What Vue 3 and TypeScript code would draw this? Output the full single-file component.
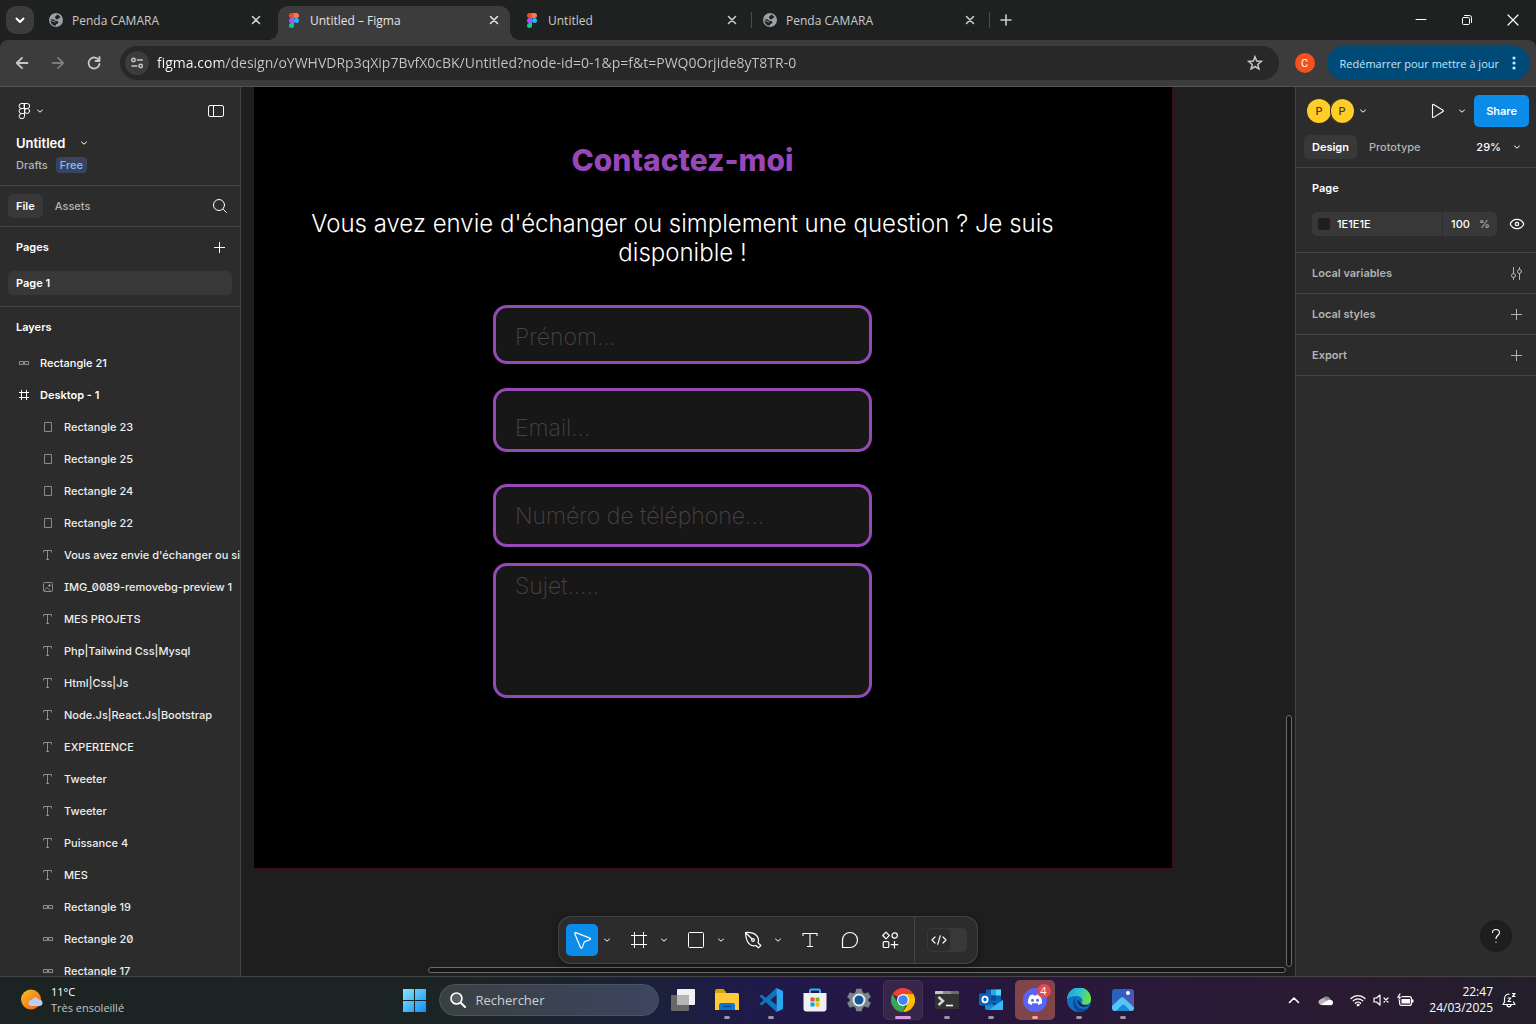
<script setup lang="ts">
import { h, ref } from 'vue'

interface Glyph {
  w: number
  h: number
  body: string
}

const line = (w: number, hgt: number, body: string): Glyph => ({
  w,
  h: hgt,
  body: `<g fill="none" stroke="currentColor" stroke-linecap="round" stroke-linejoin="round">${body}</g>`,
})

const glyphs: Record<string, Glyph> = {
  // browser
  tabMenu: line(12, 12, '<path stroke-width="2" d="M2.5 4.5 6 8l3.500-3.500"/>'),
  globe: {
    w: 16,
    h: 16,
    body: '<circle cx="8" cy="8" r="7" fill="#9aa0a6"/><path fill="#1f2120" d="M8.600 2.600c1.500.300 3.200 1.200 4 2.900l-1.600.300-.900 1.500H8.300L7.200 6.100l-.100-1.700 1.500-.700zM2.500 7.300l3.300.200 1.500 1.200 2.100.200 1 1.300-.400 1.300-1.700.400-.700 1.800c-2.900-.200-5-2.400-5.200-5l1.600.900 2 .200.900 1 .600-.500-1.200-1.300-2.600-.300z"/>',
  },
  figma: {
    w: 10,
    h: 16,
    body: '<path fill="#f24e1e" d="M2.500 1H5v5H2.500a2.500 2.500 0 0 1 0-5z"/><path fill="#ff7262" d="M5 1h2.500a2.500 2.500 0 0 1 0 5H5z"/><path fill="#a259ff" d="M2.500 6H5v5H2.500a2.500 2.500 0 0 1 0-5z"/><circle cx="7.500" cy="8.500" r="2.500" fill="#1abcfe"/><path fill="#0acf83" d="M2.500 11H5v2.500A2.500 2.500 0 1 1 2.500 11z"/>',
  },
  tabClose: line(10, 10, '<path stroke-width="1.600" d="m1.500 1.500 7 7m0-7-7 7"/>'),
  newTab: line(12, 12, '<path stroke-width="1.600" d="M6 1v10M1 6h10"/>'),
  minimise: line(12, 12, '<path d="M1 5.500h10"/>'),
  restore: line(12, 12, '<rect x="1.500" y="3.500" width="7" height="7" rx="1"/><path d="M3.500 1.500h5a2 2 0 0 1 2 2v5"/>'),
  winClose: line(12, 12, '<path stroke-width="1.200" d="m1 1 10 10m0-10L1 11"/>'),
  back: line(16, 16, '<path stroke-width="1.800" d="M13.500 8H3m5-5.200L2.700 8 8 13.200"/>'),
  forward: line(16, 16, '<path stroke-width="1.800" d="M2.500 8H13M8 2.800 13.300 8 8 13.200"/>'),
  reload: line(16, 16, '<path stroke-width="1.800" d="M13 5.500A5.500 5.500 0 1 0 13.500 9M13.500 2v4h-4"/>'),
  tune: line(16, 16, '<path stroke-width="1.600" d="M8.500 5h4.800M3 11h4.800"/><circle stroke-width="1.500" cx="4.500" cy="5" r="1.700"/><circle stroke-width="1.500" cx="11.700" cy="11" r="1.700"/>'),
  star: line(18, 18, '<path stroke-width="1.500" stroke-linejoin="miter" d="m9 2.800 1.700 4.300 4.600.300-3.500 3 1.100 4.500L9 12.500l-3.900 2.400 1.100-4.500-3.500-3 4.600-.300z"/>'),
  dots: { w: 4, h: 16, body: '<g fill="currentColor"><circle cx="2" cy="3" r="1.600"/><circle cx="2" cy="8" r="1.600"/><circle cx="2" cy="13" r="1.600"/></g>' },

  // editor
  figmaLine: line(16, 18, '<path d="M5.500 1.500h3v5h-3a2.500 2.500 0 0 1 0-5zM8.500 1.500h2.700a2.500 2.500 0 0 1 0 5H8.500zM5.500 6.500h3v5h-3a2.500 2.500 0 0 1 0-5z"/><circle cx="11.100" cy="9" r="2.500"/><path d="M5.500 11.500h3v2.400a2.700 2.600 0 1 1-3-2.400z"/>'),
  chevron: line(8, 8, '<path d="M1.500 3 4 5.200 6.500 3"/>'),
  panel: line(16, 12, '<rect x=".5" y=".5" width="15" height="11" rx="1.500"/><path d="M5.500.5v11"/>'),
  search: line(16, 16, '<circle cx="7" cy="7" r="5.500"/><path d="m11 11 3.500 3.500"/>'),
  plusThin: { w: 11, h: 11, body: '<path fill="none" stroke="currentColor" d="M5.500 0v11M0 5.500h11"/>' },
  instance: { w: 12, h: 12, body: '<path fill="none" stroke="currentColor" d="M1.500 4.500h4v3h-4zM6.500 4.500h4v3h-4zM4.500 6h3"/>' },
  frameSmall: { w: 12, h: 12, body: '<path fill="none" stroke="currentColor" d="M3.500 1v10M8.500 1v10M1 3.500h10M1 8.500h10"/>' },
  rect: { w: 12, h: 12, body: '<path fill="none" stroke="currentColor" d="M2.500 1.500h7v9h-7z"/>' },
  text: { w: 12, h: 12, body: '<path fill="none" stroke="currentColor" d="M1.500 3.500v-2h8v2M5.500 1.500v9M4 10.500h3"/>' },
  image: { w: 12, h: 12, body: '<g fill="none" stroke="currentColor"><rect x="1.500" y="1.500" width="9" height="9" rx="1"/><path d="m2 10 3-3.500L8.500 10M7.500 3v3M6 4.500h3"/></g>' },
  play: line(14, 16, '<path stroke-width="1.100" d="M1.500 2.200c0-.600.600-1 1.100-.700l9.400 5.700c.500.300.500 1 0 1.300L2.600 14.400c-.500.300-1.100 0-1.100-.600z"/>'),
  eye: line(16, 12, '<path stroke-width="1.200" d="M1.200 6C2.500 3 5 1.300 8 1.300S13.500 3 14.800 6C13.500 9 11 10.700 8 10.700S2.500 9 1.200 6z"/><circle stroke-width="1.200" cx="8" cy="6" r="1.700"/>'),
  sliders: line(13, 13, '<path d="M3.500.5v6M3.500 10.500v2M9.500.5v2M9.500 6.500v6"/><circle cx="3.500" cy="8.500" r="2"/><circle cx="9.500" cy="4.500" r="2"/>'),
  move: line(20, 20, '<path stroke-width="1.200" d="M2.800 3.700c-.300-.700.400-1.400 1.100-1.100l14 5.500c.800.300.800 1.400 0 1.700l-5.600 2.100-2.100 5.700c-.300.800-1.400.800-1.700 0z"/>'),
  frame: { w: 16, h: 16, body: '<path fill="none" stroke="currentColor" d="M3.500 0v16M12.500 0v16M0 3.500h16M0 12.500h16"/>' },
  square: { w: 16, h: 16, body: '<rect fill="none" stroke="currentColor" x=".5" y=".5" width="15" height="15" rx="1"/>' },
  pen: line(20, 20, '<path stroke-width="1.200" d="M2.500 2.500c4-.300 8.800.700 11 3 2.200 2.200 2.300 4.800 1.600 7.300l2.700 2.700-2.300 2.300-2.700-2.300c-2.700.800-5 .200-6.800-1.800-2.300-2.400-3.300-7-3.500-11.200zM3 3l6 6"/><circle stroke-width="1.200" cx="10" cy="10" r="1.400"/>'),
  textBig: { w: 16, h: 16, body: '<path fill="none" stroke="currentColor" stroke-width="1.100" d="M1 4V1.500h14V4M8 1.500v13M5 14.500h6"/>' },
  comment: line(18, 18, '<path stroke-width="1.200" d="M1.500 16.500V9A7.500 7.500 0 1 1 9 16.500z"/>'),
  actions: line(18, 18, '<path stroke-width="1.200" d="m5 1.200 3.300 3.300L5 7.800 1.700 4.500zM13.500 10.500v6.500M10.300 13.700h6.500"/><circle stroke-width="1.200" cx="13.700" cy="4.500" r="2.700"/><rect stroke-width="1.200" x="2.200" y="10.700" width="5.600" height="5.800" rx="1"/>'),
  code: line(16, 12, '<path stroke-width="1.200" d="M4 3 1 6l3 3M12 3l3 3-3 3M9.300 1.700l-2.600 8.600"/>'),
  help: line(12, 16, '<path stroke-width="1.200" d="M2.500 4.500C2.500 2.500 4 1.500 6 1.500s3.500 1.200 3.500 3.200C9.500 7.200 6 7.300 6 10.500M6 14v.300"/>'),

  // taskbar
  weather: {
    w: 24,
    h: 24,
    body: '<defs><linearGradient id="sun" x1="0" y1="0" x2="1" y2="1"><stop stop-color="#fbc02d"/><stop offset="1" stop-color="#ef5f0b"/></linearGradient></defs><circle cx="11" cy="11.500" r="10" fill="url(#sun)"/><path fill="#b9cff5" d="M11.500 18a3 3 0 0 1 .3-6 4 4 0 0 1 7-.600 3.400 3.400 0 0 1 1.400 6.600z"/>',
  },
  windows: {
    w: 24,
    h: 24,
    body: '<defs><linearGradient id="win" x1="0" y1="0" x2="1" y2="1"><stop stop-color="#8be3ff"/><stop offset="1" stop-color="#0c8ff5"/></linearGradient></defs><path fill="url(#win)" d="M1 1h11v11H1zM13 1h11v11H13zM1 13h11v11H1zM13 13h11v11H13z"/>',
  },
  lens: line(16, 16, '<circle cx="6.500" cy="6.500" r="5.500" stroke-width="1.600" fill="#8a8f93" fill-opacity=".4"/><path stroke-width="2" d="m11 11 4 4"/>'),
  taskView: { w: 24, h: 24, body: '<rect x="0" y="7" width="18" height="16" rx="1" fill="#686868"/><rect x="6" y="1" width="18" height="16" rx="1" fill="#f1f1f1"/><path fill="#b5b5b5" d="M6 7h12v10H6z"/>' },
  folder: {
    w: 24,
    h: 24,
    body: '<path fill="#e2a000" d="M0 3a2 2 0 0 1 2-2h6.500l2.500 3v4H0z"/><path fill="#ffca3a" d="M0 5h22.500A1.500 1.500 0 0 1 24 6.500V22H0z"/><path fill="#0f75d1" d="M4 22v-5a2 2 0 0 1 2-2h12a2 2 0 0 1 2 2v5z"/><path stroke="#0a4f94" stroke-width="1.500" d="M8 18.500h8"/>',
  },
  vscode: {
    w: 24,
    h: 24,
    body: '<path fill="#0a79c4" d="M17.500 0 7 10 2.800 6.800.3 8 17.500 24z"/><path fill="#1173b9" d="M.3 16 2.800 17.500 17.500 6V0z"/><path fill="#29a7f3" d="m17.500 0 5.500 2.500a1.500 1.500 0 0 1 1 1.400v16.200a1.500 1.500 0 0 1-1 1.400L17.500 24z"/><path fill="#20204c" d="M17.500 7v10l-6.300-5z"/>',
  },
  store: {
    w: 24,
    h: 24,
    body: '<path fill="none" stroke="#2fb5ef" stroke-width="2" d="M7 6V3a1.500 1.500 0 0 1 1.500-1.500h7A1.500 1.500 0 0 1 17 3v3"/><path fill="#f1f1f3" d="M.5 5h23v15.500a3 3 0 0 1-3 3h-17a3 3 0 0 1-3-3z"/><path fill="#f25022" d="M7.500 9.500h4v4h-4z"/><path fill="#7fba00" d="M12.500 9.500h4v4h-4z"/><path fill="#00a4ef" d="M7.500 14.500h4v4h-4z"/><path fill="#ffb900" d="M12.500 14.500h4v4h-4z"/>',
  },
  settings: {
    w: 24,
    h: 24,
    body: '<path fill="#7c858c" d="m9.300.8 5.400 0 .9 3.400 2.200 1.200 3.400-1.100 2.700 4.700-2.600 2.300v1.400l2.600 2.300-2.700 4.700-3.400-1.100-2.200 1.200-.9 3.400H9.300l-.9-3.400-2.200-1.200-3.400 1.100L.1 15l2.600-2.300v-1.400L.1 9l2.700-4.700 3.400 1.100 2.200-1.200z"/><circle cx="12" cy="12" r="6.500" fill="#e9eef2"/><circle cx="12" cy="12" r="4.500" fill="#10589b"/>',
  },
  chrome: {
    w: 24,
    h: 24,
    body: '<path fill="#ea4335" d="M12 12 1.600 6A12 12 0 0 1 22.400 6z"/><path fill="#fbbc05" d="M12 12V6h10.400A12 12 0 0 1 12 24l5.200-9z"/><path fill="#34a853" d="m6.800 15 5.200 3 2.500-.700L12 24A12 12 0 0 1 1.600 6z"/><circle cx="12" cy="12" r="6" fill="#fff"/><circle cx="12" cy="12" r="4.800" fill="#4285f4"/>',
  },
  terminal: { w: 24, h: 24, body: '<rect y="3" width="24" height="18" rx="1" fill="#333"/><path fill="#c8c8c8" d="M1 3h7v3H0V4a1 1 0 0 1 1-1z"/><path fill="#8c8c8c" d="M8 3h8v3H8z"/><path fill="#6b6b6b" d="M16 3h7a1 1 0 0 1 1 1v2h-8z"/><path fill="none" stroke="#d8d8d8" stroke-width="2.400" d="m3.500 9 4.500 4-4.500 4"/><path stroke="#fff" stroke-width="1.600" d="M11 17.500h7"/>' },
  outlook: {
    w: 24,
    h: 24,
    body: '<path fill="#0a63b5" d="M7 1.500h15v14H7z"/><path fill="#28a8ea" d="M12 1.500h5v6h-5z"/><path fill="#50d9ff" d="M17 1.500h5v6h-5z"/><path fill="#0a4a94" d="M12 7.500h5v5h-5z"/><path fill="#1490df" d="M6 12l9 5 9-5v10H8a2 2 0 0 1-2-2z"/><path fill="#35b8f1" d="m24 12-14 10h13a1 1 0 0 0 1-1z"/><rect y="5.500" width="12" height="12" rx="1" fill="#0b63b8"/><ellipse cx="6" cy="11.500" rx="2.600" ry="2.900" fill="none" stroke="#fff" stroke-width="1.800"/>',
  },
  discord: {
    w: 24,
    h: 24,
    body: '<circle cx="12" cy="12" r="12" fill="#5865f2"/><path fill="#fff" d="M7.200 7.300c1-.500 2-.700 3-.800l.500.900h2.600l.500-.900c1 .100 2 .300 3 .800 1.800 2.600 2.500 5.300 2.200 8-1.200.9-2.300 1.400-3.500 1.700l-.800-1.300.8-.5H8.500l.8.5-.8 1.300c-1.200-.300-2.300-.8-3.500-1.700-.300-2.700.400-5.400 2.200-8z"/><circle cx="9.500" cy="12.300" r="1.500" fill="#5865f2"/><circle cx="14.500" cy="12.300" r="1.500" fill="#5865f2"/>',
  },
  edge: {
    w: 24,
    h: 24,
    body: '<defs><linearGradient id="edgeTop" x1="0" y1="0" x2="1" y2=".3"><stop stop-color="#1b9de2"/><stop offset=".6" stop-color="#33c6c4"/><stop offset="1" stop-color="#66e04c"/></linearGradient></defs><circle cx="12" cy="12" r="12" fill="#1070c4"/><path fill="url(#edgeTop)" d="M0 11.500A12 12 0 0 1 24 11c.2 3.600-2.500 5.500-5.500 5.500-2.800 0-4.300-1-3.800-2 1.300-1.700 1-5.300-3.200-6.200C7 7.300 1.500 8.500 0 11.500z"/><path fill="#0c4b9a" d="M9 9.500c-2.500 5 1.500 11.500 7.500 11.500 2.300 0 4.200-.7 5.400-1.400A12 12 0 0 1 12.500 24C7.500 23 3 14 9 9.500z"/><path fill="#20204c" d="M10.500 11.500c-1 4 3 8 7.500 7.300 2-.3 3.500-1 4.800-2-2 1-8.500 1-9.300-2.300z"/>',
  },
  photos: {
    w: 24,
    h: 24,
    body: '<defs><linearGradient id="ph" x1="0" y1="0" x2="1" y2="1"><stop stop-color="#1567c4"/><stop offset="1" stop-color="#6a4fae"/></linearGradient></defs><rect x="1" y="1" width="22" height="22" rx="3" fill="url(#ph)"/><path fill="#53c6f5" d="m1 18 8.500-8a2.500 2.500 0 0 1 3.500 0L23 19.500V20a3 3 0 0 1-3 3H4a3 3 0 0 1-3-3z"/><path fill="#1c86d8" d="m5 23 6-6a2 2 0 0 1 2.500 0l6 6z"/><circle cx="17" cy="5" r="2" fill="#fff"/>',
  },
  up: line(12, 8, '<path stroke-width="1.600" d="M1.500 6.500 6 2l4.500 4.500"/>'),
  cloud: { w: 16, h: 12, body: '<path fill="#8c8795" d="M4 8a4.500 4.500 0 0 1 8.800-2L9 9z"/><path fill="#b9b6bf" d="M3 11a3 3 0 0 1-.5-5.800A4 4 0 0 1 8 6l4 5z"/><path fill="#fff" d="m2.500 11 6.500-4.200a4 4 0 0 1 4-.8 2.700 2.700 0 0 1 .2 5.200z"/>' },
  wifi: line(16, 14, '<path stroke-width="1.300" d="M1 5.500a10 10 0 0 1 14 0M3.200 7.900a6.800 6.800 0 0 1 9.600 0M5.400 10.200a3.700 3.700 0 0 1 5.200 0"/><circle cx="8" cy="12" r="1" fill="currentColor"/>'),
  mute: line(16, 14, '<path stroke-width="1.200" d="M1 5v4h2.500L7 12V2L3.500 5zM11 5l4 4M15 5l-4 4"/>'),
  battery: { w: 18, h: 14, body: '<rect x="3.600" y="3.600" width="11.800" height="8.800" rx="2" fill="none" stroke="#fff" stroke-width="1.200"/><path fill="#fff" d="M5.500 6h8.500v4.500h-8.500zM16 6.500h1.500v3H16z"/><path fill="#fff" stroke="#291b35" stroke-width=".6" d="M3.500 0 .5 5h2l-.8 4 4-5.500h-2L5 0z"/>' },
  bell: line(16, 16, '<path stroke-width="1.200" d="M8 2.200C5 2.200 3.500 4.500 3.500 7v3L2 12.500h12L12.500 10M6 12.800a2 2 0 0 0 4 0M7 6h2.800L7 9.500h2.800M11.500 1.500H14l-2.500 3H14"/>'),
}

const Icon = (props: { name: string }) => {
  const g = glyphs[props.name]
  return h('svg', {
    width: g.w,
    height: g.h,
    viewBox: `0 0 ${g.w} ${g.h}`,
    'aria-hidden': 'true',
    innerHTML: g.body,
  })
}
Icon.props = ['name']

const tabs = [
  { icon: 'globe', title: 'Penda CAMARA' },
  { icon: 'figma', title: 'Untitled – Figma', active: true },
  { icon: 'figma', title: 'Untitled', divider: true },
  { icon: 'globe', title: 'Penda CAMARA', divider: true },
]

const layers = [
  { icon: 'rect', name: 'Rectangle 23' },
  { icon: 'rect', name: 'Rectangle 25' },
  { icon: 'rect', name: 'Rectangle 24' },
  { icon: 'rect', name: 'Rectangle 22' },
  { icon: 'text', name: "Vous avez envie d'échanger ou simplement une question ?" },
  { icon: 'image', name: 'IMG_0089-removebg-preview 1' },
  { icon: 'text', name: 'MES PROJETS' },
  { icon: 'text', name: 'Php|Tailwind Css|Mysql' },
  { icon: 'text', name: 'Html|Css|Js' },
  { icon: 'text', name: 'Node.Js|React.Js|Bootstrap' },
  { icon: 'text', name: 'EXPERIENCE' },
  { icon: 'text', name: 'Tweeter' },
  { icon: 'text', name: 'Tweeter' },
  { icon: 'text', name: 'Puissance 4' },
  { icon: 'text', name: 'MES' },
  { icon: 'instance', name: 'Rectangle 19' },
  { icon: 'instance', name: 'Rectangle 20' },
  { icon: 'instance', name: 'Rectangle 17' },
]

const tools = [
  { icon: 'move', label: 'Move', menu: true, active: true },
  { icon: 'frame', label: 'Frame', menu: true },
  { icon: 'square', label: 'Rectangle', menu: true },
  { icon: 'pen', label: 'Pen', menu: true },
  { icon: 'textBig', label: 'Text' },
  { icon: 'comment', label: 'Comment' },
  { icon: 'actions', label: 'Actions' },
]

const sections = [
  { label: 'Local variables', icon: 'sliders' },
  { label: 'Local styles', icon: 'plusThin' },
  { label: 'Export', icon: 'plusThin' },
]

const apps = [
  { icon: 'taskView', label: 'Vue des tâches' },
  { icon: 'folder', label: 'Explorateur', state: 'open' },
  { icon: 'vscode', label: 'Visual Studio Code', state: 'open' },
  { icon: 'store', label: 'Store' },
  { icon: 'settings', label: 'Paramètres' },
  { icon: 'chrome', label: 'Chrome', state: 'focus' },
  { icon: 'terminal', label: 'Terminal', state: 'open' },
  { icon: 'outlook', label: 'Outlook', state: 'open' },
  { icon: 'discord', label: 'Discord', state: 'alert', badge: '4' },
  { icon: 'edge', label: 'Edge', state: 'open' },
  { icon: 'photos', label: 'Photos', state: 'open' },
]

const address = ref('figma.com/design/oYWHVDRp3qXip7BvfX0cBK/Untitled?node-id=0-1&p=f&t=PWQ0Orjide8yT8TR-0')
const fill = ref('1E1E1E')
const opacity = ref('100')
const devMode = ref(false)
</script>

<template>
  <div class="screen">
    <header class="browser">
      <div class="tabstrip">
        <button class="tab-menu" aria-label="Rechercher des onglets"><Icon name="tabMenu" /></button>
        <nav class="tabs">
          <div v-for="(tab, i) in tabs" :key="i" class="tab" :class="{ active: tab.active, divider: tab.divider }">
            <button class="tab-main">
              <span class="favicon"><Icon :name="tab.icon" /></span>
              <span>{{ tab.title }}</span>
            </button>
            <button class="tab-close" aria-label="Fermer"><Icon name="tabClose" /></button>
          </div>
        </nav>
        <button class="new-tab" aria-label="Nouvel onglet"><Icon name="newTab" /></button>
        <div class="window-controls">
          <button aria-label="Réduire"><Icon name="minimise" /></button>
          <button aria-label="Restaurer"><Icon name="restore" /></button>
          <button aria-label="Fermer la fenêtre"><Icon name="winClose" /></button>
        </div>
      </div>
      <div class="navbar">
        <button class="nav" aria-label="Précédent"><Icon name="back" /></button>
        <button class="nav" aria-label="Suivant" disabled><Icon name="forward" /></button>
        <button class="nav" aria-label="Actualiser"><Icon name="reload" /></button>
        <div class="omnibox">
          <button class="site-info" aria-label="Informations sur le site"><Icon name="tune" /></button>
          <input v-model="address" type="text" aria-label="Adresse" spellcheck="false" />
          <button class="bookmark" aria-label="Ajouter aux favoris"><Icon name="star" /></button>
        </div>
        <button class="profile">C</button>
        <button class="update">
          <span>Redémarrer pour mettre à jour</span>
          <Icon name="dots" />
        </button>
      </div>
    </header>

    <main class="editor">
      <aside class="left">
        <div class="file-head">
          <div class="menu-row">
            <button class="logo" aria-label="Menu"><Icon name="figmaLine" /><Icon name="chevron" /></button>
            <button aria-label="Réduire le panneau"><Icon name="panel" /></button>
          </div>
          <button class="file-name">Untitled <Icon name="chevron" /></button>
          <div class="file-meta"><a href="#drafts">Drafts</a><span class="plan">Free</span></div>
        </div>
        <div class="side-tabs">
          <button class="pill on">File</button>
          <button class="pill">Assets</button>
          <button class="push" aria-label="Search"><Icon name="search" /></button>
        </div>
        <section class="pages">
          <div class="side-title">
            <h2>Pages</h2>
            <button aria-label="Add page"><Icon name="plusThin" /></button>
          </div>
          <button class="page-row">Page 1</button>
        </section>
        <section class="layers">
          <div class="side-title"><h2>Layers</h2></div>
          <ul>
            <li class="layer top"><Icon name="instance" /><span>Rectangle 21</span></li>
            <li class="layer top board-layer"><Icon name="frameSmall" /><span>Desktop - 1</span></li>
            <li v-for="(layer, i) in layers" :key="i" class="layer">
              <Icon :name="layer.icon" /><span>{{ layer.name }}</span>
            </li>
          </ul>
        </section>
      </aside>

      <section class="canvas">
        <form class="artboard" @submit.prevent>
          <h1>Contactez-moi</h1>
          <p>Vous avez envie d'échanger ou simplement une question ? Je suis disponible !</p>
          <input class="field first" type="text" placeholder="Prénom..." aria-label="Prénom" />
          <input class="field mail" type="email" placeholder="Email..." aria-label="Email" />
          <input class="field phone" type="tel" placeholder="Numéro de téléphone..." aria-label="Numéro de téléphone" />
          <textarea class="field subject" placeholder="Sujet....." aria-label="Sujet"></textarea>
        </form>

        <div class="scroll vertical"></div>
        <div class="scroll horizontal"></div>

        <div class="toolbar">
          <div class="tools">
            <div v-for="tool in tools" :key="tool.icon" class="tool">
              <button class="tool-main" :class="{ on: tool.active }" :aria-label="tool.label"><Icon :name="tool.icon" /></button>
              <button v-if="tool.menu" class="tool-menu" :aria-label="tool.label + ' tools'"><Icon name="chevron" /></button>
            </div>
          </div>
          <label class="dev">
            <input v-model="devMode" type="checkbox" role="switch" aria-label="Dev Mode" />
            <span class="knob"><Icon name="code" /></span>
          </label>
        </div>
      </section>

      <aside class="right">
        <div class="share-head">
          <div class="share-row">
            <button class="people" aria-label="Multiplayer">
              <span class="avatar">P</span><span class="avatar">P</span><Icon name="chevron" />
            </button>
            <button class="present" aria-label="Present"><Icon name="play" /></button>
            <button class="present-menu" aria-label="Present options"><Icon name="chevron" /></button>
            <button class="share">Share</button>
          </div>
          <div class="mode-row">
            <button class="pill on">Design</button>
            <button class="pill">Prototype</button>
            <button class="zoom">29% <Icon name="chevron" /></button>
          </div>
        </div>
        <section class="page-props">
          <h2>Page</h2>
          <div class="fill-row">
            <div class="fill-box">
              <span class="swatch"></span>
              <input v-model="fill" class="hex" type="text" aria-label="Page color" />
              <input v-model="opacity" class="opacity" type="text" aria-label="Opacity" />
              <span class="unit">%</span>
            </div>
            <button aria-label="Toggle visibility"><Icon name="eye" /></button>
          </div>
        </section>
        <section v-for="s in sections" :key="s.label" class="prop">
          <h2>{{ s.label }}</h2>
          <button :aria-label="s.label"><Icon :name="s.icon" /></button>
        </section>
        <button class="help" aria-label="Help"><Icon name="help" /></button>
      </aside>
    </main>

    <footer class="taskbar">
      <button class="weather">
        <Icon name="weather" />
        <span class="forecast"><span>11°C</span><span class="dim">Très ensoleillé</span></span>
      </button>
      <div class="dock">
        <button class="app" aria-label="Démarrer"><Icon name="windows" /></button>
        <label class="search"><Icon name="lens" /><input type="search" placeholder="Rechercher" aria-label="Rechercher" /></label>
        <button v-for="app in apps" :key="app.icon" class="app" :class="app.state" :aria-label="app.label">
          <Icon :name="app.icon" />
          <span v-if="app.badge" class="badge">{{ app.badge }}</span>
        </button>
      </div>
      <div class="tray">
        <button aria-label="Icônes cachées"><Icon name="up" /></button>
        <button class="tray-cloud" aria-label="OneDrive"><Icon name="cloud" /></button>
        <button class="tray-status" aria-label="Réseau, son et batterie">
          <Icon name="wifi" /><Icon name="mute" /><Icon name="battery" />
        </button>
        <button class="clock"><span>22:47</span><span>24/03/2025</span></button>
        <button aria-label="Notifications"><Icon name="bell" /></button>
      </div>
    </footer>
  </div>
</template>

<style>
body {
  background: #1e1e1e;
}
</style>

<style scoped>
.screen {
  display: flex;
  flex-direction: column;
  height: 100vh;
  overflow: hidden;
  font-family: 'Open Sans', 'Noto Sans', sans-serif;
  font-size: 12px;
  color: #fff;
}
.screen *,
.screen *::before,
.screen *::after {
  box-sizing: border-box;
}
button {
  display: flex;
  align-items: center;
  padding: 0;
  border: 0;
  background: none;
  color: inherit;
  font: inherit;
}
input,
textarea {
  min-width: 0;
  margin: 0;
  padding: 0;
  border: 0;
  outline: 0;
  background: none;
  color: inherit;
  font: inherit;
}
svg {
  display: block;
  flex: none;
}
h1,
h2,
p,
ul {
  margin: 0;
  padding: 0;
  font: inherit;
}
a {
  color: inherit;
  text-decoration: none;
}

/* browser */
.browser {
  flex: none;
  background: #1f2120;
}
.tabstrip {
  display: flex;
  align-items: center;
  height: 40px;
  padding-left: 6px;
}
.tab-menu {
  justify-content: center;
  width: 28px;
  height: 28px;
  margin-right: 6px;
  border-radius: 10px;
  background: #3c3c3c;
}
.tabs {
  display: flex;
  align-self: stretch;
}
.tab {
  position: relative;
  display: flex;
  align-items: center;
  width: 238px;
  padding: 6px 17px 6px 8px;
  color: #c9cccb;
}
.tab-main {
  flex: 1;
  gap: 8px;
}
.favicon {
  display: flex;
  justify-content: center;
  width: 16px;
}
.tab.active {
  color: #e3e3e3;
}
.tab.active::before {
  content: '';
  position: absolute;
  inset: 6px 6px 0 0;
  border-radius: 10px 10px 0 0;
  background: #3c3c3c;
}
.tab.active::after {
  content: '';
  position: absolute;
  inset: auto -4px 0 -10px;
  height: 10px;
  background:
    radial-gradient(circle at 0 0, transparent 10px, #3c3c3c 10px) left / 10px 10px no-repeat,
    radial-gradient(circle at 100% 0, transparent 10px, #3c3c3c 10px) right / 10px 10px no-repeat;
}
.tab.active > * {
  position: relative;
  z-index: 1;
}
.tab.divider::after {
  content: '';
  position: absolute;
  inset: 12px 2px 12px auto;
  width: 1px;
  background: #4a4c4b;
}
.new-tab {
  margin-left: 8px;
  color: #c9cccb;
}
.window-controls {
  display: flex;
  margin-left: auto;
}
.window-controls button {
  justify-content: center;
  width: 46px;
  height: 40px;
}
.navbar {
  display: flex;
  align-items: center;
  height: 47px;
  padding: 0 6px 0 4px;
  border-bottom: 1px solid #555;
  border-radius: 8px 8px 0 0;
  background: #3c3c3c;
}
.nav {
  justify-content: center;
  width: 36px;
  height: 34px;
  color: #c7c7c7;
}
.nav:disabled {
  color: #7b7b7b;
}
.omnibox {
  display: flex;
  flex: 1;
  align-items: center;
  height: 34px;
  margin-left: 8px;
  padding: 0 15px 0 5px;
  border-radius: 17px;
  background: #282828;
}
.site-info {
  justify-content: center;
  width: 24px;
  height: 24px;
  margin-right: 8px;
  border-radius: 50%;
  background: #3c3c3c;
  color: #c7c7c7;
}
.omnibox input {
  flex: 1;
  background: linear-gradient(90deg, #fff 66px, #c7c7c7 66px);
  -webkit-background-clip: text;
  background-clip: text;
  color: transparent;
  font-size: 14px;
  line-height: 18px;
}
.bookmark {
  color: #c7c7c7;
}
.profile {
  justify-content: center;
  width: 20px;
  height: 20px;
  margin: 0 12px 0 16px;
  border-radius: 50%;
  background: #f4511e;
  font: 11px Roboto, sans-serif;
}
.update {
  justify-content: space-between;
  gap: 13px;
  height: 34px;
  padding: 0 14px 0 13px;
  border-radius: 17px;
  background: #004a77;
  color: #c2e7ff;
  font-size: 11px;
}

/* editor */
.editor {
  display: flex;
  flex: 1;
  min-height: 0;
  font-family: Inter, sans-serif;
  font-size: 11px;
  font-weight: 500;
  line-height: 16px;
}
.left,
.right {
  flex: none;
  width: 241px;
  background: #2c2c2c;
}
.left {
  border-right: 1px solid #444;
  overflow: hidden;
}
.file-head {
  height: 99px;
  padding: 12px 16px 0;
  border-bottom: 1px solid #444;
}
.menu-row {
  display: flex;
  align-items: center;
  justify-content: space-between;
  height: 24px;
}
.logo {
  gap: 4px;
}
.file-name {
  gap: 15px;
  height: 24px;
  margin-top: 8px;
  font-size: 13px;
  font-weight: 600;
}
.file-meta {
  display: flex;
  align-items: center;
  gap: 8px;
  margin-top: 2px;
  color: #b3b3b3;
}
.plan {
  padding: 0 4px;
  border-radius: 4px;
  background: #394360;
  color: #7cc4f8;
}
.side-tabs {
  display: flex;
  align-items: center;
  gap: 4px;
  height: 41px;
  padding: 0 12px 0 8px;
  border-bottom: 1px solid #444;
}
.pill {
  height: 24px;
  padding: 0 8px;
  border-radius: 5px;
  color: #b3b3b3;
}
.pill.on {
  background: #383838;
  color: #fff;
  font-weight: 600;
}
.push {
  margin-left: auto;
}
.pages {
  height: 80px;
  padding: 0 8px;
  border-bottom: 1px solid #444;
}
.side-title {
  display: flex;
  align-items: center;
  justify-content: space-between;
  height: 40px;
  padding: 0 7px 0 8px;
  font-weight: 600;
}
.pages .side-title {
  padding: 0 7px 0 8px;
}
.page-row {
  width: 100%;
  height: 24px;
  margin-top: 4px;
  padding: 0 8px;
  border-radius: 5px;
  background: #383838;
  font-weight: 600;
}
.layers {
  padding-left: 8px;
}
.layer {
  display: flex;
  align-items: center;
  gap: 10px;
  height: 32px;
  padding-left: 34px;
  color: #eee;
  font-feature-settings: 'zero', 'cv08';
  white-space: nowrap;
}
.layer svg {
  color: #8c8c8c;
}
.layer.top {
  padding-left: 10px;
  color: #fff;
}
.board-layer {
  font-weight: 600;
}
.board-layer svg {
  color: #fff;
}

.canvas {
  position: relative;
  flex: 1;
  min-width: 0;
  padding: 0 122px 107px 13px;
  background: #1e1e1e;
  overflow: hidden;
}
.artboard {
  display: flex;
  flex-direction: column;
  align-items: center;
  height: 100%;
  padding: 54px 61px 0 0;
  border: solid #3d0f12;
  border-width: 0 1px 1px 0;
  background: #000;
}
.artboard h1 {
  color: #9747b8;
  font-size: 30px;
  font-weight: 800;
  line-height: 38px;
}
.artboard p {
  max-width: 780px;
  margin: 30px 0 38px;
  font-size: 24px;
  font-weight: 300;
  line-height: 29px;
  text-align: center;
}
.field {
  display: block;
  width: 379px;
  height: 64px;
  padding: 0 19px;
  border: 3px solid #9449b6;
  border-radius: 14px;
  background: #171717;
  font-size: 23px;
  font-weight: 200;
  line-height: 30px;
  resize: none;
}
.field::placeholder {
  color: #484345;
  opacity: 1;
}
.field.first {
  height: 59px;
  padding-top: 5px;
  margin-bottom: 24px;
}
.field.mail {
  padding-top: 16px;
  margin-bottom: 32px;
}
.field.phone {
  height: 63px;
  margin-bottom: 16px;
}
.field.subject {
  height: 135px;
  padding-top: 5px;
}
.scroll {
  position: absolute;
  border: 1px solid #6b6b6b;
  border-radius: 3px;
  background: #151415;
}
.vertical {
  right: 3px;
  bottom: 9px;
  width: 6px;
  height: 252px;
}
.horizontal {
  right: 9px;
  bottom: 3px;
  left: 187px;
  height: 6px;
}
.toolbar {
  position: absolute;
  right: 0;
  bottom: 12px;
  left: 0;
  display: flex;
  width: fit-content;
  height: 48px;
  margin: 0 auto;
  border-radius: 13px;
  background: #2c2c2c;
  box-shadow: inset 0 0 0 1px #444, 0 2px 6px #0006;
}
.tools {
  display: flex;
  align-items: center;
  gap: 8px;
  padding: 0 8px;
  border-right: 1px solid #444;
}
.tool {
  display: flex;
}
.tool-main {
  justify-content: center;
  width: 32px;
  height: 32px;
  border-radius: 5px;
}
.tool-main.on {
  background: #0c8ce9;
}
.tool-menu {
  justify-content: center;
  width: 17px;
}
.dev {
  position: relative;
  display: flex;
  align-items: center;
  padding: 0 11px 0 12px;
}
.dev input {
  width: 40px;
  height: 24px;
  border-radius: 5px;
  background: #383838;
  appearance: none;
}
.knob {
  position: absolute;
  left: 12px;
  display: flex;
  align-items: center;
  justify-content: center;
  width: 24px;
  height: 24px;
  border: 1px solid #383838;
  border-radius: 5px;
  background: #2c2c2c;
}

.right {
  position: relative;
  border-left: 1px solid #444;
}
.share-head {
  height: 81px;
  padding: 8px 7px 0 8px;
  border-bottom: 1px solid #444;
}
.share-row,
.mode-row {
  display: flex;
  align-items: center;
}
.share-row {
  height: 32px;
}
.people {
  padding-left: 3px;
}
.people svg {
  margin-left: 5px;
}
.avatar {
  width: 24px;
  height: 24px;
  border-radius: 50%;
  background: #ffcd29;
  color: #4a3a00;
  line-height: 24px;
  text-align: center;
}
.avatar + .avatar {
  margin-left: -1px;
  box-shadow: inset 1px 0 #2c2c2c;
}
.present {
  margin-left: auto;
}
.present-menu {
  margin: 0 8px 0 13px;
}
.share {
  height: 32px;
  padding: 0 12px;
  border-radius: 5px;
  background: #0c8ce9;
  font-weight: 600;
}
.mode-row {
  gap: 4px;
  height: 24px;
  margin-top: 8px;
}
.zoom {
  gap: 12px;
  margin-left: auto;
  padding-right: 8px;
}
.page-props {
  height: 85px;
  padding-left: 16px;
  border-bottom: 1px solid #444;
}
.page-props h2 {
  height: 44px;
  line-height: 40px;
  font-weight: 600;
}
.fill-row {
  display: flex;
  align-items: center;
  justify-content: space-between;
  padding-right: 11px;
}
.fill-box {
  display: flex;
  align-items: center;
  width: 185px;
  height: 24px;
  padding: 0 7px 0 6px;
  border-radius: 5px;
  background: #383838;
}
.swatch {
  width: 12px;
  height: 12px;
  margin-right: 7px;
  border-radius: 2px;
  background: #1e1e1e;
}
.hex {
  flex: 1;
}
.opacity {
  width: 37px;
  height: 24px;
  padding-left: 8px;
  border-left: 1px solid #2c2c2c;
}
.unit {
  color: #b3b3b3;
}
.prop {
  display: flex;
  align-items: center;
  justify-content: space-between;
  height: 41px;
  padding: 0 14px 0 16px;
  border-bottom: 1px solid #444;
  color: #b3b3b3;
  font-weight: 600;
}
.prop button {
  justify-content: center;
  width: 11px;
}
.help {
  position: absolute;
  right: 24px;
  bottom: 24px;
  justify-content: center;
  width: 32px;
  height: 32px;
  border-radius: 50%;
  background: #1e1e1e;
}

/* taskbar */
.taskbar {
  display: grid;
  flex: none;
  grid-template-columns: 1fr auto 1fr;
  align-items: center;
  height: 48px;
  background: linear-gradient(90deg, #1c2423, #1b2424 30%, #1a2139 42%, #20194c 50%, #27163f 60%, #2b1a33 85%, #221f2b);
  box-shadow: inset 0 1px #444;
  line-height: 16px;
}
.weather {
  gap: 7px;
  padding-left: 20px;
  font-size: 11px;
}
.forecast,
.clock {
  display: flex;
  flex-direction: column;
  align-items: flex-start;
}
.dim {
  color: #c0c4c4;
}
.dock {
  display: flex;
  align-items: center;
}
.app {
  position: relative;
  justify-content: center;
  width: 44px;
  height: 48px;
}
.app svg {
  position: relative;
}
.app::after {
  position: absolute;
  bottom: 5px;
  left: 19px;
  width: 6px;
  height: 3px;
  border-radius: 2px;
  background: #9c94a8;
}
.open::after,
.focus::after,
.alert::after {
  content: '';
}
.focus::before,
.alert::before {
  content: '';
  position: absolute;
  inset: 4px 2px;
  border-radius: 5px;
}
.focus::before {
  border: 1px solid #43344f;
  background: #372649;
}
.focus::after {
  left: 14px;
  width: 16px;
  background: #d59ae0;
}
.alert::before {
  background: #80444b;
}
.alert::after {
  background: #ff99a4;
}
.badge {
  position: absolute;
  top: 8px;
  right: 6px;
  width: 14px;
  height: 14px;
  border-radius: 50%;
  background: #e24950;
  font-size: 11px;
  line-height: 14px;
  text-align: center;
}
.search {
  display: flex;
  align-items: center;
  gap: 10px;
  width: 220px;
  height: 32px;
  margin: 0 2px 0 3px;
  padding: 0 10px;
  border: 1px solid #4b5260;
  border-radius: 16px;
  background: linear-gradient(90deg, #3a4142, #3c4460);
}
.search input {
  flex: 1;
  font-size: 13px;
}
.search input::placeholder {
  color: #cdd0d4;
  opacity: 1;
}
.tray {
  display: flex;
  align-items: center;
  justify-content: flex-end;
  padding-right: 19px;
}
.tray-cloud {
  margin: 0 16px 0 18px;
}
.tray-status {
  gap: 7px;
  margin-right: 15px;
}
.clock {
  align-items: flex-end;
  margin-right: 8px;
}
</style>
